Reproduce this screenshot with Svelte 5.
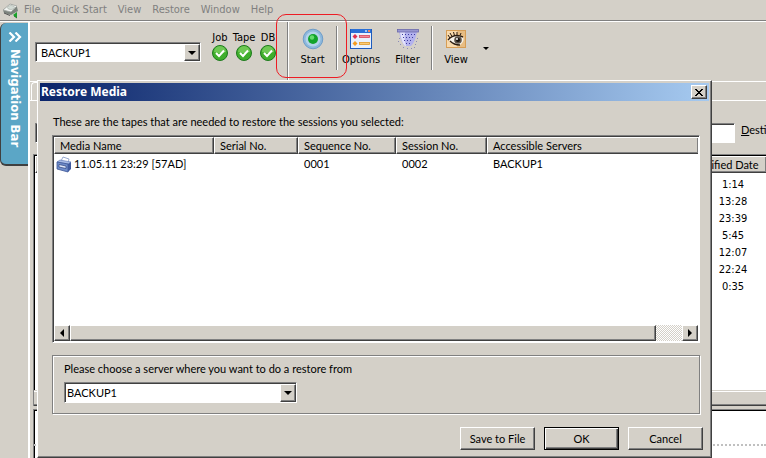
<script>
	const menu = ['File', 'Quick Start', 'View', 'Restore', 'Window', 'Help']
	const services = ['Job', 'Tape', 'DB']
	const dates = ['1:14', '13:28', '23:39', '5:45', '12:07', '22:24', '0:35']
	const columns = ['Media Name', 'Serial No.', 'Sequence No.', 'Session No.', 'Accessible Servers']
	const tapes = [
		{ name: '11.05.11 23:29 [57AD]', serial: '', sequence: '0001', session: '0002', servers: 'BACKUP1' }
	]
	// mesh of the funnel: row height, first hole, number of holes
	const mesh = [
		[6, 5, 5], [9, 6, 4], [12, 7, 3], [15, 9, 2]
	]
	const drops = [
		[2, 10], [20, 10], [1, 13], [19, 13], [3, 16], [18, 16], [6, 19], [10, 20], [14, 20], [17, 19]
	]

	let source = 'BACKUP1'
	let target = 'BACKUP1'
	let path = ''
</script>

<div class="app">
	<header class="menubar">
		<svg class="logo" viewBox="0 0 18 18" aria-hidden="true">
			<path d="M1 8 L9 2 L15 5 L16 9 L9 13 L2 11Z" fill="#7d847e" />
			<path d="M1 8 L8 2 L15 4 L9 10Z" fill="#f2f5f2" stroke="#9da19d" stroke-width=".8" />
			<ellipse cx="9" cy="5.500" rx="3.500" ry="2" fill="#d3dbd5" stroke="#a7aea8" stroke-width=".6" />
			<path d="M2 11 L8 13.500" stroke="#555" />
			<path d="M15 10 V16 L11 13Z" fill="#18a32a" />
			<path d="M12 14 L15 16" stroke="#0b6315" stroke-width=".8" />
		</svg>
		<nav>
			{#each menu as item}
				<button class="menu-item">{item}</button>
			{/each}
		</nav>
	</header>

	<div class="workspace">
		<aside>
			<button class="navbar">
				<svg viewBox="0 0 14 10" aria-hidden="true">
					<path d="M1.500 .5 L6 5 L1.500 9.500 M7.500 .5 L12 5 L7.500 9.500" fill="none" stroke="#fff" stroke-width="2.200" />
				</svg>
				<span>Navigation Bar</span>
			</button>
		</aside>

		<main>
			<div class="toolbar">
				<div class="combo source">
					<select aria-label="Backup server" bind:value={source}>
						<option>BACKUP1</option>
					</select>
					<span class="drop"><i class="down"></i></span>
				</div>
				<div class="services">
					{#each services as service}
						<div class="service">
							<span>{service}</span>
							<svg viewBox="0 0 16 16" aria-hidden="true">
								<circle cx="8" cy="8" r="7.500" fill="#3fae2c" stroke="#1d7a1d" />
								<path d="M2 7 A6 6 0 0 1 14 7 Q8 9 2 7Z" fill="#7fd062" opacity=".75" />
								<path d="M4 8 L7 11 L12 5.500" fill="none" stroke="#fff" stroke-width="2" />
							</svg>
						</div>
					{/each}
				</div>
				<div class="divider tall"></div>
				<button class="tool start">
					<svg viewBox="0 0 22 22" aria-hidden="true">
						<circle cx="11" cy="11" r="9.800" fill="#8db8dc" stroke="#6f9dc8" />
						<circle cx="11" cy="11" r="7.500" fill="#b4d3ea" />
						<circle cx="11" cy="11" r="5" fill="#12a32b" />
						<circle cx="10" cy="9.500" r="2.200" fill="#62dc6d" />
					</svg>
					<span>Start</span>
				</button>
				<div class="divider"></div>
				<button class="tool options">
					<svg viewBox="0 0 22 22" aria-hidden="true">
						<rect x=".5" y="1.500" width="21" height="19" fill="#e9f1fc" stroke="#1d5bbd" />
						<rect x="1" y="1" width="20" height="4" fill="#2a6fd6" />
						<rect x="15" y="2" width="2" height="2" fill="#9cc4f5" />
						<rect x="18" y="2" width="2" height="2" fill="#f0855a" />
						<path d="M5 6 L7.500 8.500 L5 11 L2.500 8.500Z" fill="#e0314f" />
						<rect x="9.500" y="7.500" width="10" height="2" fill="#f28a93" stroke="#d6455b" stroke-width=".8" />
						<path d="M5 13 L7.500 15.500 L5 18 L2.500 15.500Z" fill="#f49b1f" />
						<rect x="9.500" y="14.500" width="10" height="2" fill="#fccb74" stroke="#e09a2a" stroke-width=".8" />
					</svg>
					<span>Options</span>
				</button>
				<button class="tool filter">
					<svg viewBox="0 0 22 22" aria-hidden="true">
						<path d="M2 4 H20 C19 10 17 15 14 18 H8 C5 15 3 10 2 4Z" fill="#b3b2ee" />
						<path d="M3 4 H8 C7 9 8 14 9 18 H8 C5 15 4 10 3 4Z" fill="#e2e2fb" />
						<rect x=".5" y="1.500" width="21" height="2.500" fill="#9897d0" stroke="#6b6aac" stroke-width=".8" />
						{#each mesh as [y, x, count]}
							{#each { length: count } as _, n}
								<rect x={x + n * 3} {y} width="1" height="1" fill="#3f3da0" />
							{/each}
						{/each}
						{#each drops as [x, y]}
							<rect {x} {y} width="1" height="1" fill="#8b8ab8" />
						{/each}
					</svg>
					<span>Filter</span>
				</button>
				<div class="divider"></div>
				<button class="tool view">
					<svg viewBox="0 0 22 22" aria-hidden="true">
						<rect x="1.500" y="2.500" width="19" height="17" fill="#f8d9ac" stroke="#d69d55" />
						<rect x="12" y="3" width="8" height="16" fill="#e7bd84" />
						<path d="M4 12 Q9 5 18 9 Q20 13 15 17 Q8 17 4 12Z" fill="#f7f3ea" />
						<path d="M3 12 Q9 5 18 9 M5 13 Q9 17 15 17" fill="none" stroke="#2a1b10" stroke-width="1.400" />
						<circle cx="13" cy="12" r="3.800" fill="#5c5248" />
						<circle cx="13" cy="12" r="2" fill="#15100c" />
						<circle cx="12" cy="11" r="1" fill="#fff" />
						<path d="M5 10 L3 7 M7 8.500 L5 5 M9.500 7.500 L8.500 4 M12 7 V4 M15 7.500 L16 5" stroke="#2a1b10" />
					</svg>
					<span>View</span>
				</button>
				<button class="more" aria-label="View menu"><i class="down small"></i></button>
				<div class="highlight"></div>
			</div>

			<div class="tabs"><div class="tab"></div></div>
			<div class="destination">
				<input id="destination" type="text" bind:value={path} />
				<label for="destination"><u>D</u>esti</label>
			</div>
			<div class="sessions">
				<table>
					<thead>
						<tr><th></th><th class="date">Modified Date</th></tr>
					</thead>
					<tbody>
						{#each dates as date}
							<tr><td></td><td class="date">{date}</td></tr>
						{/each}
					</tbody>
				</table>
				<div class="sessions-scroll"></div>
			</div>
			<div class="details"><hr /></div>
		</main>
	</div>

	<div class="dialog" role="dialog" aria-labelledby="dialog-title">
		<div class="titlebar">
			<h1 id="dialog-title">Restore Media</h1>
			<button class="close" aria-label="Close">
				<svg viewBox="0 0 8 7" aria-hidden="true" shape-rendering="crispEdges">
					<path d="M0 0h2v1h1v1h2v-1h1v-1h2v1h-1v1h-1v1h-1v1h1v1h1v1h1v1h-2v-1h-1v-1h-2v1h-1v1h-2v-1h1v-1h1v-1h1v-1h-1v-1h-1v-1h-1z" />
				</svg>
			</button>
		</div>
		<div class="content">
			<p>These are the tapes that are needed to restore the sessions you selected:</p>
			<div class="media">
				<table>
					<thead>
						<tr>
							{#each columns as column}
								<th>{column}</th>
							{/each}
						</tr>
					</thead>
					<tbody>
						{#each tapes as tape}
							<tr>
								<td class="name">
									<svg viewBox="0 0 16 17" aria-hidden="true">
										<path d="M5 5 L7 1 L13 3 L12 7Z" fill="#fff" stroke="#7f93c4" stroke-width=".8" />
										<path d="M1 6 L4 4 L15 6 L12 8Z" fill="#a9bce6" stroke="#5a74b4" stroke-width=".6" />
										<path d="M1 6 L12 8 V16 L1 13Z" fill="#6f8dcb" stroke="#3c5596" stroke-width=".8" />
										<path d="M12 8 L15 6 V13 L12 16Z" fill="#3f5a9f" />
										<path d="M3 8.500 L10 10 V12.500 L3 11Z" fill="#dfe8fa" stroke="#2c417b" stroke-width=".7" />
									</svg>
									<span>{tape.name}</span>
								</td>
								<td>{tape.serial}</td>
								<td>{tape.sequence}</td>
								<td>{tape.session}</td>
								<td>{tape.servers}</td>
							</tr>
						{/each}
					</tbody>
				</table>
				<div class="scrollbar">
					<button aria-label="Scroll left"><i class="left"></i></button>
					<div class="thumb"></div>
					<div class="track"></div>
					<button aria-label="Scroll right"><i class="right"></i></button>
				</div>
			</div>
			<div class="group">
				<label for="target">Please choose a server where you want to do a restore from</label>
				<div class="combo target">
					<select id="target" bind:value={target}>
						<option>BACKUP1</option>
					</select>
					<span class="drop"><i class="down"></i></span>
				</div>
			</div>
			<div class="actions">
				<button class="push">Save to File</button>
				<button class="push default">OK</button>
				<button class="push">Cancel</button>
			</div>
		</div>
	</div>
</div>

<style>
	:global(body) {
		background: #d4d0c8;
	}

	.app {
		--face: #d4d0c8;
		--shadow: #808080;
		--dark: #404040;
		--ui: Lato, 'Liberation Sans', sans-serif;
		--tahoma: 'DejaVu Sans Condensed', Tahoma, sans-serif;
		position: relative;
		display: flex;
		flex-direction: column;
		height: 100vh;
		min-height: 458px;
		overflow: hidden;
		background: var(--face);
		color: #000;
		font: 11px/14px var(--ui);
	}

	.app * {
		box-sizing: border-box;
	}

	button,
	input,
	select {
		margin: 0;
		padding: 0;
		border: 0;
		border-radius: 0;
		background: var(--face);
		color: inherit;
		font: inherit;
		outline: none;
		appearance: none;
	}

	svg {
		display: block;
	}

	i {
		display: block;
		border: 4px solid transparent;
	}

	.down {
		border-top-color: #000;
		border-bottom: 0;
	}

	.small {
		border-width: 3px 3px 0;
	}

	.left {
		border-right-color: #000;
		border-left: 0;
	}

	.right {
		border-left-color: #000;
		border-right: 0;
	}

	.menubar {
		display: flex;
		align-items: center;
		flex: none;
		height: 22px;
		padding-left: 2px;
		border-bottom: 1px solid #fff;
		box-shadow: inset 0 -1px var(--shadow);
	}

	.logo {
		width: 18px;
		height: 18px;
	}

	nav {
		display: flex;
		gap: 11px;
		padding: 0 0 2px 4px;
	}

	.menu-item {
		color: #808080;
		font: 11px/16px var(--tahoma);
	}

	.workspace {
		display: flex;
		flex: 1;
		min-height: 0;
	}

	aside {
		flex: none;
		width: 30px;
		border-right: 2px solid #fff;
	}

	.navbar {
		display: flex;
		flex-direction: column;
		align-items: center;
		gap: 7px;
		width: 28px;
		height: 143px;
		margin-top: 1px;
		padding-top: 9px;
		border: solid #404040;
		border-width: 0 0 2px 1px;
		border-radius: 6px 0 0 6px;
		background: #5ba6c6;
		color: #fff;
		font: bold 13px/16px var(--tahoma);
	}

	.navbar svg {
		width: 14px;
		height: 10px;
	}

	.navbar span {
		writing-mode: vertical-rl;
	}

	main {
		display: flex;
		flex: 1;
		flex-direction: column;
		min-width: 0;
	}

	.toolbar {
		position: relative;
		display: flex;
		flex: none;
		height: 60px;
		padding-left: 5px;
		border-bottom: 1px solid #fff;
		font: 11px/16px var(--tahoma);
	}

	.combo {
		display: grid;
		grid-template-columns: 1fr 16px;
		border: 1px solid;
		border-color: var(--shadow) #fff #fff var(--shadow);
		background: #fff;
		box-shadow: inset 1px 1px var(--dark);
		padding: 1px 0 0 1px;
		font: 11px/14px var(--ui);
	}

	.combo select {
		grid-area: 1 / 1 / 2 / 3;
		padding-left: 1px;
		background: none;
	}

	.drop {
		display: grid;
		grid-area: 1 / 2;
		place-items: center;
		border: 1px solid;
		border-color: #fff var(--dark) var(--dark) #fff;
		background: var(--face);
		box-shadow: inset -1px -1px var(--shadow);
		pointer-events: none;
	}

	.source {
		width: 166px;
		height: 20px;
		margin: 20px 7px 0 0;
	}

	.source select {
		padding-left: 4px;
	}

	.services {
		display: flex;
	}

	.service {
		display: flex;
		flex-direction: column;
		align-items: center;
		width: 24px;
		padding-top: 8px;
	}

	.service svg {
		width: 16px;
		height: 16px;
	}

	.service span {
		line-height: 15px;
	}

	.divider {
		width: 2px;
		height: 44px;
		margin-top: 4px;
		border-left: 1px solid var(--shadow);
		border-right: 1px solid #fff;
	}

	.tall {
		height: 58px;
		margin: 0 0 0 7px;
	}

	.tool {
		display: flex;
		flex-direction: column;
		align-items: center;
		gap: 2px;
		width: 46px;
		height: 48px;
		padding-top: 6px;
		background: none;
	}

	.tool svg {
		width: 22px;
		height: 22px;
	}

	.start {
		width: 47px;
	}

	.filter {
		width: 47px;
	}

	.more {
		display: grid;
		place-items: center;
		width: 14px;
		height: 52px;
		background: none;
	}

	.highlight {
		position: absolute;
		top: -8px;
		left: 246px;
		width: 71px;
		height: 64px;
		border: 1px solid #ed1c24;
		border-radius: 10px;
		pointer-events: none;
	}

	.tabs {
		flex: none;
		height: 19px;
		padding-left: 1px;
		border-bottom: 1px solid #fff;
	}

	.tab {
		width: 80px;
		height: 18px;
		border: solid #fff;
		border-width: 1px 0 0 1px;
		border-radius: 4px 0 0 0;
	}

	.destination {
		display: flex;
		flex: none;
		gap: 6px;
		padding: 22px 0 11px 5px;
	}

	.destination input {
		flex: 1;
		min-width: 0;
		height: 20px;
		border: 1px solid;
		border-color: var(--shadow) #fff #fff var(--shadow);
		background: #fff;
		box-shadow: inset 1px 1px var(--dark);
	}

	.destination label {
		width: 25px;
	}

	.sessions {
		display: flex;
		flex: none;
		flex-direction: column;
		height: 252px;
		margin-left: 3px;
		border: solid #808080;
		border-width: 1px 0 0 1px;
		background: #fff;
		box-shadow: inset 1px 1px #000;
	}

	table {
		width: 100%;
		border-collapse: separate;
		border-spacing: 0;
		table-layout: fixed;
	}

	th {
		height: 17px;
		padding: 0 0 0 5px;
		border: 1px solid;
		border-color: #fff var(--dark) var(--dark) #fff;
		background: var(--face);
		box-shadow: inset -1px -1px var(--shadow);
		font-weight: normal;
		line-height: 14px;
		text-align: left;
		white-space: nowrap;
	}

	.sessions table {
		padding: 1px 0 0 1px;
	}

	.sessions td {
		height: 17px;
		padding: 3px 0 0;
		line-height: 14px;
	}

	.sessions .date {
		width: 83px;
	}

	.sessions th.date {
		border-right: 0;
	}

	.sessions td.date {
		padding: 3px 0 0 17px;
		font: 11px/14px var(--tahoma);
		text-align: center;
	}

	.sessions tbody::before {
		display: block;
		height: 2px;
		content: '';
	}

	.sessions-scroll {
		height: 16px;
		margin-top: auto;
		border-top: 1px solid var(--face);
		border-bottom: 1px solid var(--dark);
		background: var(--face);
		box-shadow: inset 0 1px #fff, inset 0 -1px var(--shadow);
	}

	.details {
		flex: 1;
		margin: 3px 0 0 3px;
		border: solid #808080;
		border-width: 1px 0 0 1px;
		background: #fff;
		box-shadow: inset 1px 1px #000;
		padding-top: 34px;
	}

	hr {
		margin: 0;
		border: 0;
		border-top: 2px dotted #c0c0c0;
	}

	.dialog {
		position: absolute;
		top: 80px;
		left: 37px;
		right: 54px;
		padding: 2px;
		border: 1px solid;
		border-color: #fff var(--dark) var(--dark) #fff;
		background: var(--face);
		box-shadow: inset -1px -1px var(--shadow);
	}

	.titlebar {
		display: flex;
		align-items: center;
		justify-content: space-between;
		height: 18px;
		padding: 0 2px 0 1px;
		background: linear-gradient(90deg, #0a246a, #a6caf0);
	}

	h1 {
		margin: 0;
		color: #fff;
		font: bold 12px/16px 'Noto Sans', sans-serif;
	}

	.close {
		display: grid;
		place-items: center;
		width: 16px;
		height: 14px;
		border: 1px solid;
		border-color: #fff var(--dark) var(--dark) #fff;
		box-shadow: inset -1px -1px var(--shadow);
	}

	.close svg {
		width: 8px;
		height: 7px;
	}

	.content {
		padding: 14px 9px 5px 12px;
	}

	p {
		margin: 0 0 6px;
		padding-left: 1px;
	}

	.media {
		display: flex;
		flex-direction: column;
		height: 208px;
		border: 1px solid;
		border-color: var(--shadow) #fff #fff var(--shadow);
		background: #fff;
		box-shadow: inset 1px 1px var(--dark);
		padding: 1px;
	}

	.media th:nth-child(1) {
		width: 160px;
	}

	.media th:nth-child(2) {
		width: 84px;
	}

	.media th:nth-child(3) {
		width: 98px;
	}

	.media th:nth-child(4) {
		width: 91px;
	}

	.media th:last-child {
		border-right: 0;
	}

	.media td {
		height: 20px;
		padding: 0 0 0 6px;
	}

	.media .name {
		display: flex;
		align-items: center;
		gap: 2px;
		padding-left: 2px;
	}

	.name svg {
		width: 16px;
		height: 17px;
	}

	.scrollbar {
		display: flex;
		height: 16px;
		margin-top: auto;
	}

	.scrollbar button {
		display: grid;
		flex: none;
		place-items: center;
		width: 16px;
	}

	.scrollbar button,
	.thumb {
		border: 1px solid;
		border-color: #fff var(--dark) var(--dark) #fff;
		background: var(--face);
		box-shadow: inset -1px -1px var(--shadow);
	}

	.thumb {
		flex: 1;
	}

	.track {
		flex: none;
		width: 26px;
		background: conic-gradient(#fff 25%, #d4d0c8 0 50%, #fff 0 75%, #d4d0c8 0) 0 0 / 2px 2px;
	}

	.group {
		height: 59px;
		margin-top: 12px;
		padding: 6px 11px;
		border: 1px solid var(--shadow);
		box-shadow: inset 1px 1px #fff, 1px 1px #fff;
	}

	.group label {
		display: block;
		margin-bottom: 6px;
	}

	.target {
		width: 233px;
		height: 21px;
	}

	.actions {
		display: flex;
		justify-content: flex-end;
		gap: 9px;
		margin: 13px -3px 0 0;
	}

	.push {
		width: 75px;
		height: 23px;
		border: 1px solid;
		border-color: #fff var(--dark) var(--dark) #fff;
		box-shadow: inset -1px -1px var(--shadow);
	}

	.default {
		border-color: #000;
		box-shadow: inset 1px 1px #fff, inset -1px -1px var(--dark), inset -2px -2px var(--shadow);
	}
</style>
